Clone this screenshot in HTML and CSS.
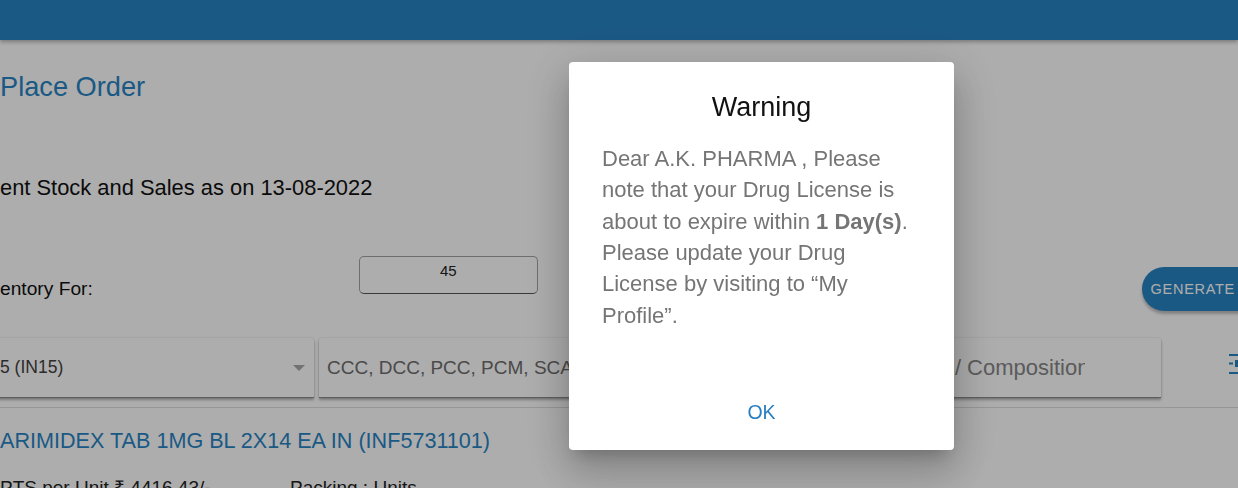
FILE: index.html
```html
<!DOCTYPE html>
<html lang="en">
<head>
<meta charset="utf-8">
<title>Place Order</title>
<link rel="stylesheet" href="styles.css">
</head>
<body>
<header class="topbar"></header>
<main class="page">
  <h1 class="title">Place Order</h1>
  <p class="stock">ent Stock and Sales as on 13-08-2022</p>
  <div class="inv-row">
    <span class="inv-label">entory For:</span>
    <div class="days-box">45</div>
    <button class="generate">GENERATE REPORT</button>
  </div>
  <div class="filters">
    <div class="card card-plant">
      <span class="card-text">5 (IN15)</span>
      <span class="caret"></span>
    </div>
    <div class="card card-div">
      <span class="card-text muted">CCC, DCC, PCC, PCM, SCA, TCC</span>
    </div>
    <div class="card card-search">
      <span class="card-text placeholder">Search by Product Name / Composition</span>
    </div>
    <svg class="side-icon" width="24" height="24" viewBox="0 0 24 24" aria-hidden="true">
      <rect x="0" y="2" width="24" height="2" fill="currentColor"/>
      <rect x="0" y="10.5" width="4" height="2" fill="currentColor"/>
      <rect x="6" y="8" width="10" height="7" fill="currentColor"/>
      <rect x="0" y="20" width="24" height="2" fill="currentColor"/>
    </svg>
  </div>
  <hr class="divider">
  <h2 class="product">ARIMIDEX TAB 1MG BL 2X14 EA IN (INF5731101)</h2>
  <div class="meta">
    <span>PTS per Unit ₹ 4416.43/-</span>
    <span>Packing : Units</span>
  </div>
</main>
<div class="backdrop"></div>
<div class="dialog" role="dialog">
  <h3 class="dialog-title">Warning</h3>
  <p class="dialog-body">Dear A.K. PHARMA , Please note that your Drug License is about to expire within <b>1 Day(s)</b>. Please update your Drug License by visiting to “My Profile”.</p>
  <div class="dialog-actions"><button class="ok">OK</button></div>
</div>
</body>
</html>
```

FILE: styles.css
```css
html, body {
  margin: 0;
  padding: 0;
  overflow: hidden;
  height: 488px;
  background: #ffffff;
  font-family: "Liberation Sans", Arial, sans-serif;
  color: #222;
}

.topbar {
  height: 40px;
  background: #2884c4;
  box-shadow: 0 2px 4px rgba(0, 0, 0, 0.3);
  position: relative;
  z-index: 1;
}

.page {
  width: 1320px;
}

.title {
  margin: 31px 0 0 0;
  font-size: 27.2px;
  line-height: 32px;
  font-weight: 400;
  color: #2884c4;
}

.stock {
  margin: 72px 0 0 0;
  font-size: 21.9px;
  line-height: 26px;
  color: #111;
}

.inv-row {
  margin-top: 55px;
  display: flex;
  align-items: flex-start;
  height: 55px;
}

.inv-label {
  flex: 0 0 359px;
  margin-top: 22px;
  font-size: 19.2px;
  line-height: 22px;
  color: #111;
}

.days-box {
  box-sizing: border-box;
  width: 180px;
  height: 38px;
  border: 1px solid #a3a3a3;
  border-bottom-color: #555;
  border-radius: 5px;
  padding-top: 5px;
  text-align: center;
  font-size: 15px;
  line-height: 18px;
  color: #222;
}

.generate {
  margin-left: 604px;
  margin-top: 11px;
  height: 44px;
  border: 0;
  border-radius: 22px;
  padding: 0 16px 0 9px;
  background: #2884c4;
  color: #fff;
  font-family: "Liberation Sans", Arial, sans-serif;
  font-size: 14.5px;
  letter-spacing: 0.7px;
  white-space: nowrap;
  box-shadow: 0 3px 3px rgba(0, 0, 0, 0.25);
}

.filters {
  margin-top: 27px;
  display: flex;
  align-items: flex-start;
  gap: 5px;
}

.card {
  box-sizing: border-box;
  height: 60px;
  display: flex;
  align-items: center;
  background: #fff;
  border-bottom: 1px solid rgba(0, 0, 0, 0.45);
  box-shadow: 0 2px 3px rgba(0, 0, 0, 0.3), 0 0 2px rgba(0, 0, 0, 0.14);
  border-radius: 3px 3px 0 0;
  overflow: hidden;
}

.card-text {
  font-size: 19px;
  white-space: nowrap;
  overflow: hidden;
  color: #424242;
}

.card-plant .card-text { font-size: 17.5px; }
.card-text.muted { color: #6d6d6d; }
.card-text.placeholder { color: #878787; font-size: 22px; }

.card-plant {
  width: 330px;
  margin-left: -16px;
  padding: 0 9px 0 16px;
  justify-content: space-between;
}

.caret {
  width: 0;
  height: 0;
  border-left: 6px solid transparent;
  border-right: 6px solid transparent;
  border-top: 6px solid #a8a8a8;
  margin-top: 1px;
}

.card-div {
  width: 365px;
  padding: 0 8px;
}

.card-search {
  width: 472px;
  padding: 0 76px 0 14px;
}

.side-icon {
  margin-left: 63px;
  margin-top: 14px;
  color: #2884c4;
  flex: 0 0 24px;
}

.divider {
  margin: 9px 0 0 0;
  border: 0;
  height: 1px;
  background: #dedede;
}

.product {
  margin: 20px 0 0 0;
  font-size: 21.6px;
  line-height: 26px;
  font-weight: 400;
  color: #2884c4;
}

.meta {
  margin-top: 22px;
  display: grid;
  grid-template-columns: 290px auto;
  font-size: 19px;
  line-height: 24px;
  color: #222;
}

.backdrop {
  position: fixed;
  inset: 0;
  background: rgba(0, 0, 0, 0.32);
  z-index: 5;
}

.dialog {
  position: fixed;
  left: 569px;
  top: 62px;
  width: 385px;
  height: 388px;
  box-sizing: border-box;
  padding: 29px 37px 20px 33px;
  background: #fff;
  border-radius: 4px;
  z-index: 6;
  display: flex;
  flex-direction: column;
  box-shadow: 0 11px 15px -7px rgba(0, 0, 0, 0.2),
              0 24px 38px 3px rgba(0, 0, 0, 0.14),
              0 9px 46px 8px rgba(0, 0, 0, 0.12);
}

.dialog-title {
  margin: 0;
  text-align: center;
  font-size: 27px;
  line-height: 32px;
  font-weight: 400;
  color: #111;
  padding-left: 4px;
}

.dialog-body {
  margin: 20px 0 0 0;
  font-size: 22px;
  line-height: 31.35px;
  color: #757575;
}

.dialog-body b {
  font-weight: 700;
}

.dialog-actions {
  margin-top: auto;
  display: flex;
  justify-content: center;
  padding-left: 4px;
}

.ok {
  height: 36px;
  border: 0;
  background: transparent;
  padding: 0 16px;
  font-family: "Liberation Sans", Arial, sans-serif;
  font-size: 19.5px;
  line-height: 36px;
  color: #2a7fc1;
  margin-top: -1px;
}
```
